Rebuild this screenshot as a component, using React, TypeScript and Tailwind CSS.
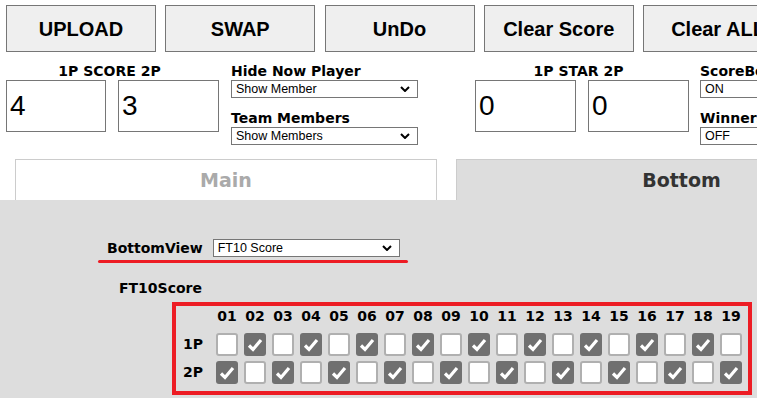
const buttons = ["UPLOAD", "SWAP", "UnDo", "Clear Score", "Clear ALL"];
const cols = Array.from({ length: 19 }, (_, i) => String(i + 1).padStart(2, "0"));

function Chevron() {
  return (
    <svg width="10" height="6" viewBox="0 0 10 6" className="shrink-0">
      <path d="M1 1 L5 5 L9 1" fill="none" stroke="#000" strokeWidth="2" />
    </svg>
  );
}

function FakeSelect({ value, chevron = true }: { value: string; chevron?: boolean }) {
  return (
    <div className="flex h-[18px] w-[187px] shrink-0 items-center justify-between border border-[#767676] bg-white pl-[4px] pr-[7px] font-['Liberation_Sans',Arial,sans-serif] text-[12.5px] font-normal leading-none text-black">
      <span>{value}</span>
      {chevron && <Chevron />}
    </div>
  );
}

function ScoreBox({ value, w }: { value: string; w: string }) {
  return (
    <div className={`flex h-[52px] ${w} shrink-0 items-center border border-[#767676] bg-white pl-[3px] font-['Liberation_Sans',Arial,sans-serif] text-[28px] font-normal text-black`}>
      {value}
    </div>
  );
}

function Box({ checked }: { checked: boolean }) {
  if (checked) {
    return (
      <div className="flex h-[23px] w-[22px] shrink-0 items-center justify-center rounded-[3px] bg-[#707070]">
        <svg width="18" height="16" viewBox="0 0 18 16">
          <path d="M3 8.5 L7 12.5 L15 3" fill="none" stroke="#fff" strokeWidth="3.2" />
        </svg>
      </div>
    );
  }
  return <div className="h-[23px] w-[22px] shrink-0 rounded-[3px] border-2 border-[#b0b0b0] bg-white" />;
}

export default function App() {
  return (
    <div className="h-[398px] w-full overflow-hidden bg-white font-['DejaVu_Sans',Verdana,sans-serif] text-black">
      {/* buttons */}
      <div className="flex gap-[9.25px] whitespace-nowrap pl-[6px] pt-[5px]">
        {buttons.map((b) => (
          <button
            key={b}
            className="flex h-[47px] w-[150px] shrink-0 items-center justify-center border border-[#767676] bg-[#efefef] font-['Liberation_Sans',Arial,sans-serif] text-[20px] font-bold text-black"
          >
            {b}
          </button>
        ))}
      </div>

      {/* scores and options */}
      <div className="mt-[10px] flex whitespace-nowrap pl-[6px] text-[14px] font-bold leading-[18px]">
        <div className="flex w-[213px] shrink-0 flex-col">
          <div className="pr-[6px] text-center">1P SCORE 2P</div>
          <div className="flex gap-[12px]">
            <ScoreBox value="4" w="w-[100px]" />
            <ScoreBox value="3" w="w-[101px]" />
          </div>
        </div>
        <div className="ml-[12px] flex w-[187px] shrink-0 flex-col">
          <div>Hide Now Player</div>
          <FakeSelect value="Show Member" />
          <div className="mt-[11px]">Team Members</div>
          <FakeSelect value="Show Members" />
        </div>
        <div className="ml-[57px] flex w-[213px] shrink-0 flex-col">
          <div className="pr-[6px] text-center">1P STAR 2P</div>
          <div className="flex gap-[12px]">
            <ScoreBox value="0" w="w-[101px]" />
            <ScoreBox value="0" w="w-[101px]" />
          </div>
        </div>
        <div className="ml-[12px] flex w-[187px] shrink-0 flex-col">
          <div>ScoreBoard</div>
          <FakeSelect value="ON" />
          <div className="mt-[11px]">Winners</div>
          <FakeSelect value="OFF" />
        </div>
      </div>

      {/* tabs */}
      <div className="mt-[14px] flex h-[41px] whitespace-nowrap text-[19px] font-bold">
        <div className="ml-[15px] flex w-[422px] shrink-0 items-center justify-center border border-b-0 border-[#cccccc] bg-white text-[#aaaaaa]">
          Main
        </div>
        <div className="ml-[19px] flex w-[450px] shrink-0 items-center justify-center border-l border-t border-[#cccccc] bg-[#dddddd] text-[#333333]">
          Bottom
        </div>
      </div>

      {/* bottom panel */}
      <div className="h-[198px] bg-[#dddddd] pt-[39px] text-[14px] font-bold">
        <div className="flex h-[18px] items-center pl-[107px]">
          <span className="leading-[18px]">BottomView</span>
          <div className="ml-[10px]">
            <FakeSelect value="FT10 Score" />
          </div>
        </div>
        <div className="ml-[98px] mt-[3px] h-[3px] w-[310px] rounded-full bg-[#ed1c24]" />
        <div className="mt-[16px] pl-[119px] leading-[18px]">FT10Score</div>

        <div className="ml-[172px] mt-[5px] w-[580px] border-4 border-[#ed1c24] pb-[7px] pl-[7px]">
          <div className="flex h-[20px] items-center leading-[20px]">
            <div className="w-[33px] shrink-0" />
            {cols.map((c) => (
              <div key={c} className="mr-[6px] w-[22px] shrink-0 text-center">
                {c}
              </div>
            ))}
          </div>
          {["1P", "2P"].map((p, r) => (
            <div key={p} className={`flex h-[23px] items-center ${r === 0 ? "mt-[7px]" : "mt-[5px]"}`}>
              <div className="w-[33px] shrink-0">{p}</div>
              {cols.map((c, i) => (
                <div key={c} className="mr-[6px] shrink-0">
                  <Box checked={r === 0 ? i % 2 === 1 : i % 2 === 0} />
                </div>
              ))}
            </div>
          ))}
        </div>
      </div>
    </div>
  );
}
